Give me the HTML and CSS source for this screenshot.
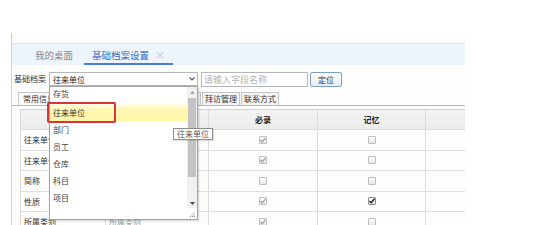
FILE: index.html
```html
<!DOCTYPE html>
<html lang="zh-CN">
<head>
<meta charset="utf-8">
<title>基础档案设置</title>
<link rel="stylesheet" href="styles.css">
</head>
<body>
<div class="frame">
  <div class="tabbar">
    <div class="tab">我的桌面</div>
    <div class="tab active">基础档案设置<span class="close">×</span></div>
  </div>
  <div class="toolbar">
    <span class="label">基础档案</span>
    <div class="select">
      <span>往来单位</span>
      <svg class="chev" width="6" height="4" viewBox="0 0 6 4"><polyline points="0.5,0.5 3,3 5.5,0.5" fill="none" stroke="#555" stroke-width="1.1"/></svg>
    </div>
    <div class="search">请输入字段名称</div>
    <div class="btn">定位</div>
  </div>
  <div class="subtabs">
    <div class="stab on">常用信息</div>
    <div class="stab">信用信息</div>
    <div class="stab">银行账户信息</div>
    <div class="stab">收付款协议</div>
    <div class="stab">拜访管理</div>
    <div class="stab">联系方式</div>
  </div>
  <div class="grid">
    <div class="row head">
      <div class="cell"></div>
      <div class="cell"></div>
      <div class="cell c">必录</div>
      <div class="cell c">记忆</div>
      <div class="cell"></div>
    </div>
    <div class="row">
      <div class="cell t">往来单位编码</div>
      <div class="cell t">往来单位编码</div>
      <div class="cell c"><span class="cb dis"><svg viewBox="0 0 8 8"><polyline points="1.5,4 3.3,5.8 6.5,1.8" fill="none" stroke="#9a9a9a" stroke-width="1.2"/></svg></span></div>
      <div class="cell c"><span class="cb"></span></div>
      <div class="cell"></div>
    </div>
    <div class="row">
      <div class="cell t">往来单位名称</div>
      <div class="cell t">往来单位名称</div>
      <div class="cell c"><span class="cb dis"><svg viewBox="0 0 8 8"><polyline points="1.5,4 3.3,5.8 6.5,1.8" fill="none" stroke="#9a9a9a" stroke-width="1.2"/></svg></span></div>
      <div class="cell c"><span class="cb"></span></div>
      <div class="cell"></div>
    </div>
    <div class="row">
      <div class="cell t">简称</div>
      <div class="cell t">简称</div>
      <div class="cell c"><span class="cb dis"></span></div>
      <div class="cell c"><span class="cb"></span></div>
      <div class="cell"></div>
    </div>
    <div class="row">
      <div class="cell t">性质</div>
      <div class="cell t">性质</div>
      <div class="cell c"><span class="cb dis"><svg viewBox="0 0 8 8"><polyline points="1.5,4 3.3,5.8 6.5,1.8" fill="none" stroke="#9a9a9a" stroke-width="1.2"/></svg></span></div>
      <div class="cell c"><span class="cb on"><svg viewBox="0 0 8 8"><polyline points="1.5,4 3.3,5.8 6.5,1.8" fill="none" stroke="#222" stroke-width="1.4"/></svg></span></div>
      <div class="cell"></div>
    </div>
    <div class="row">
      <div class="cell t">所属类别</div>
      <div class="cell t light">所属类别</div>
      <div class="cell c"><span class="cb dis"><svg viewBox="0 0 8 8"><polyline points="1.5,4 3.3,5.8 6.5,1.8" fill="none" stroke="#9a9a9a" stroke-width="1.2"/></svg></span></div>
      <div class="cell c"><span class="cb"></span></div>
      <div class="cell"></div>
    </div>
  </div>
</div>

<div class="dropdown">
  <div class="list">
    <div class="item first">存货</div>
    <div class="item hl">往来单位</div>
    <div class="item">部门</div>
    <div class="item">员工</div>
    <div class="item">仓库</div>
    <div class="item">科目</div>
    <div class="item">项目</div>
  </div>
  <div class="sbar">
    <div class="arrow"><svg width="5" height="3" viewBox="0 0 5 3"><polygon points="2.5,0 5,3 0,3" fill="#a8a8a8"/></svg></div>
    <div class="track"><div class="thumb"></div></div>
    <div class="arrow"><svg width="5" height="3" viewBox="0 0 5 3"><polygon points="0,0 5,0 2.5,3" fill="#444"/></svg></div>
    <div class="grip"><svg width="5" height="5" viewBox="0 0 5 5"><rect x="3.5" y="0.5" width="1" height="1" fill="#888"/><rect x="1.5" y="2.5" width="1" height="1" fill="#888"/><rect x="3.5" y="2.5" width="1" height="1" fill="#888"/><rect x="0" y="4" width="1" height="1" fill="#888"/><rect x="2" y="4" width="1" height="1" fill="#888"/><rect x="4" y="4" width="1" height="1" fill="#888"/></svg></div>
  </div>
</div>
<div class="mark"></div>
<div class="tip">往来单位</div>
</body>
</html>
```
FILE: styles.css
```css
html, body {
  margin: 0;
  padding: 0;
}
body {
  position: relative;
  width: 554px;
  height: 225px;
  overflow: hidden;
  background: #fff;
  font-family: "Noto Sans CJK SC", "Noto Sans", sans-serif;
  font-size: 8px;
  color: #333;
}
.frame {
  margin: 33px 0 0 11px;
  width: 454px;
  height: 192px;
  box-sizing: border-box;
  border-left: 1px solid #cdd1d6;
  padding-top: 10px;
  overflow: hidden;
  background: #fdfdfc;
}
.tabbar {
  height: 22px;
  box-sizing: border-box;
  border-top: 1px solid #dde3ea;
  background: #eef4fb;
  display: flex;
  gap: 3px;
  padding-left: 15px;
  font-size: 9.5px;
}
.tab {
  display: flex;
  align-items: center;
  padding: 2px 8px 0;
  color: #8b8b8b;
  border-bottom: 2px solid transparent;
}
.tab.active {
  color: #2f6ec4;
  border-bottom-color: #3f80d6;
}
.close {
  margin-left: 6px;
  color: #b9bec6;
  font-size: 10px;
}
.toolbar {
  display: flex;
  align-items: flex-start;
  margin-top: 7px;
  padding-left: 2px;
  height: 15px;
}
.label {
  width: 35px;
  line-height: 14px;
  color: #333;
}
.select {
  width: 149px;
  height: 14px;
  box-sizing: border-box;
  border: 1px solid #b3b6bb;
  background: #fff;
  display: flex;
  align-items: center;
  justify-content: space-between;
  padding: 0 2px 0 3px;
  color: #222;
}
.chev {
  display: block;
}
.search {
  margin-left: 3px;
  width: 107px;
  height: 15px;
  box-sizing: border-box;
  border: 1px solid #b3b6bb;
  background: #fff;
  color: #b4b4b4;
  font-size: 9px;
  line-height: 13px;
  padding-left: 2px;
}
.btn {
  margin-left: 2px;
  width: 32px;
  height: 15px;
  box-sizing: border-box;
  border: 1px solid #7f9fc2;
  border-radius: 2px;
  background: linear-gradient(#fbfcfe, #e7edf5);
  text-align: center;
  line-height: 13px;
  color: #333;
}
.subtabs {
  display: flex;
  align-items: flex-end;
  gap: 1px;
  margin-top: 5px;
  padding-left: 6px;
  height: 13px;
  border-bottom: 1px solid #b8b8b8;
}
.stab {
  height: 13px;
  box-sizing: border-box;
  border: 1px solid #c6c6c6;
  border-bottom: none;
  background: #f4f4f4;
  padding: 0 2px;
  line-height: 12px;
  white-space: nowrap;
  color: #333;
}
.stab.on {
  padding: 0 4px;
  background: #fafafa;
}
.grid {
  margin: 3px 0 0 8px;
}
.row {
  display: grid;
  grid-template-columns: 85px 103px 109px 108px 40px;
  height: 20.5px;
  box-sizing: border-box;
  border-bottom: 1px solid #dedede;
}
.row.head {
  height: 21px;
  border-top: 1px solid #d2d2d2;
  background: linear-gradient(#f4f4f4, #ebebeb);
  font-weight: bold;
  color: #222;
}
.cell {
  border-left: 1px solid #dcdcdc;
  display: flex;
  align-items: center;
  overflow: hidden;
  white-space: nowrap;
}
.cell.t {
  padding-left: 3px;
}
.cell.light {
  color: #9a9a9a;
}
.cell.c {
  justify-content: center;
}
.cb {
  width: 8px;
  height: 8px;
  box-sizing: border-box;
  border: 1px solid #bdbdbd;
  border-radius: 1px;
  background: linear-gradient(#fdfdfd, #e6e6e6);
  position: relative;
  display: block;
}
.cb.on {
  border-color: #8a8a8a;
}
.cb svg {
  position: absolute;
  left: -1px;
  top: -1px;
  width: 8px;
  height: 8px;
}
.dropdown {
  position: absolute;
  left: 49px;
  top: 86px;
  width: 149px;
  height: 134px;
  box-sizing: border-box;
  border: 1px solid #a3a3a3;
  background: #fff;
  box-shadow: 1px 1px 2px rgba(0, 0, 0, 0.18);
  display: flex;
}
.list {
  flex: 1;
  padding-top: 0;
}
.item {
  height: 17px;
  line-height: 17px;
  padding-left: 3px;
  color: #444;
}
.item.first {
  line-height: 14px;
}
.item.hl {
  background: linear-gradient(#fffde6 0, #fff8b4 30%, #fff6a6 100%);
  color: #333;
}
.sbar {
  width: 10px;
  display: flex;
  flex-direction: column;
  background: #f1f1f1;
}
.arrow {
  height: 10px;
  display: flex;
  align-items: center;
  justify-content: center;
}
.track {
  flex: 1;
  padding-top: 1px;
}
.thumb {
  height: 79px;
  margin: 0 1px;
  background: #c3c3c3;
}
.grip {
  height: 11px;
  background: #fff;
  display: flex;
  align-items: flex-end;
  justify-content: center;
  padding-bottom: 2px;
  box-sizing: border-box;
}
.mark {
  position: absolute;
  left: 47px;
  top: 102px;
  width: 69px;
  height: 21px;
  box-sizing: border-box;
  border: 2px solid #d8343b;
  border-radius: 2px;
}
.tip {
  position: absolute;
  left: 173px;
  top: 128px;
  width: 40px;
  height: 12px;
  box-sizing: border-box;
  border: 1px solid #8e8e8e;
  background: #fff;
  font-size: 8px;
  line-height: 10px;
  text-align: center;
  color: #555;
  box-shadow: 1px 1px 1px rgba(0, 0, 0, 0.12);
}
```
